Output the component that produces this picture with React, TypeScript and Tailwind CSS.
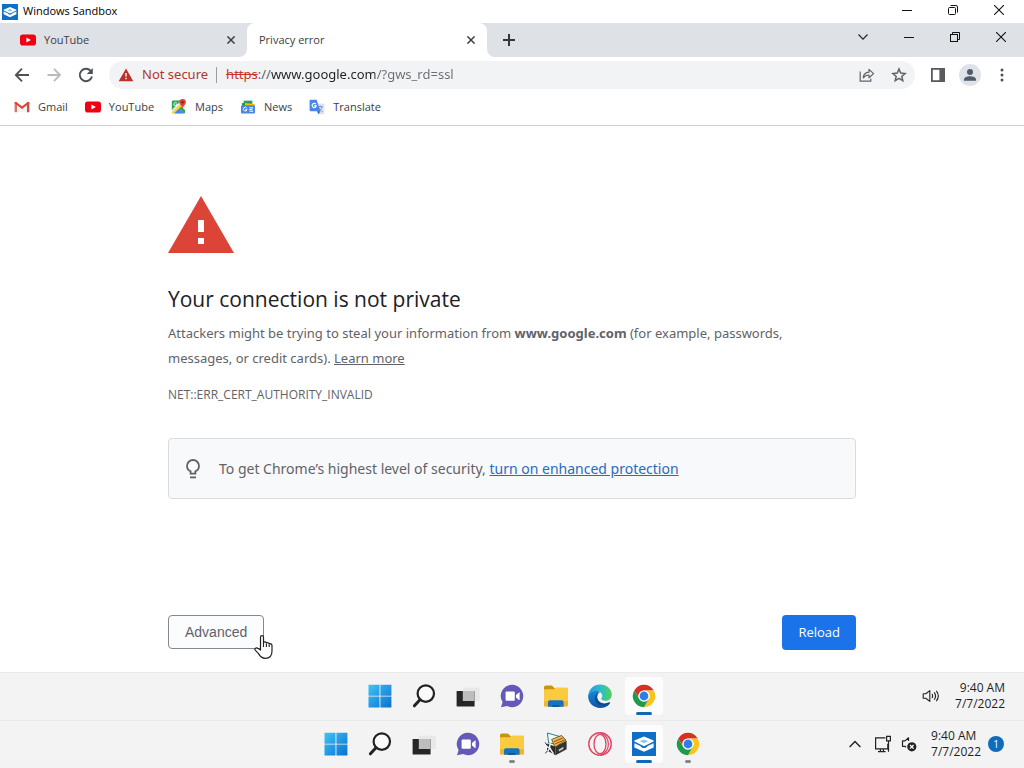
import React from "react";

type P = { className?: string };

/* ---------- brand icons ---------- */
const YouTube = ({ className = "w-4 h-4" }: P) => (
  <svg viewBox="0 0 16 16" className={className} aria-hidden="true">
    <rect x="0" y="2.4" width="16" height="11.2" rx="2.8" fill="#f00010" />
    <path d="M6.4 5.4v5.2L10.9 8z" fill="#fff" />
  </svg>
);
const Gmail = () => (
  <svg viewBox="0 0 16 16" className="w-4 h-4" aria-hidden="true">
    <path d="M.6 3.2h2.6v10H1.3a.8.8 0 0 1-.7-.8z" fill="#d9776f" />
    <path d="M12.8 3.2h2.6v9.2a.8.8 0 0 1-.7.8h-1.9z" fill="#c5524a" />
    <path d="M.6 4.6 8 10.2l7.4-5.6V3.3L14 2.8 8 7.3 2 2.8.6 3.3z" fill="#e0473b" />
    <path d="M3.2 6.6 8 10.2l4.8-3.6v6.6H3.2z" fill="#f6f3f3" />
  </svg>
);
const Maps = () => (
  <svg viewBox="0 0 16 16" className="w-4 h-4" aria-hidden="true">
    <rect x=".8" y="1.6" width="13.2" height="13" rx="1.2" fill="#e8eaed" />
    <path d="M.8 2.8a1.2 1.2 0 0 1 1.2-1.2h8L.8 11z" fill="#34a853" />
    <path d="M.8 13.2 11.6 2.4l2 2L3.2 14.6H2a1.2 1.2 0 0 1-1.2-1.2z" fill="#fbd14b" />
    <path d="M3 14.6 8 9.6l5 5z" fill="#4285f4" />
    <path d="m8 9.6 2.2-2.2 3.8 3.8v2.2a1.2 1.2 0 0 1-1 1.2z" fill="#34a853" />
    <path d="M5.9 4.2a1.7 1.7 0 1 0 .4 1.5H4.8" stroke="#fff" strokeWidth=".9" fill="none" />
    <path d="M11.6 0a3.3 3.3 0 0 1 3.3 3.3c0 2.4-2.6 3.1-3.3 6.2-.7-3.1-3.3-3.8-3.3-6.2A3.3 3.3 0 0 1 11.6 0z" fill="#db4437" />
    <circle cx="11.6" cy="3.3" r="1.2" fill="#7b2a20" />
  </svg>
);
const News = () => (
  <svg viewBox="0 0 16 16" className="w-4 h-4" aria-hidden="true">
    <path d="M3.6 1.6h8.8v6H3.6z" fill="#34a853" />
    <path d="m1.8 4.2 9-2 .8 5H2.4z" fill="#2f8f50" />
    <path d="m5 4 9.6 1-.5 4H5z" fill="#fbbc04" />
    <rect x="1" y="6.2" width="14" height="8.4" rx="1" fill="#4a86e0" />
    <path d="M6.8 9a1.9 1.9 0 1 0 .3 1.7H5.4M9.4 8.8h3.8M9.4 10.5h3M9.4 12.2h3.8" stroke="#fff" strokeWidth="1" fill="none" />
  </svg>
);
const Translate = () => (
  <svg viewBox="0 0 16 16" className="w-4 h-4" aria-hidden="true">
    <path d="M6 4.4h8.4a1 1 0 0 1 1 1v8.8a1 1 0 0 1-1 1H9.6z" fill="#dfe3ea" />
    <path d="M8.8 7.6h5M11.2 6.6v1M13 7.8c-.6 2.2-1.8 3.6-3.6 4.6M9.8 9c.8 1.4 2 2.6 3.8 3.6" stroke="#6a8fd0" strokeWidth=".9" fill="none" />
    <path d="M1.6.8h6l3.8 11.4H1.6a1 1 0 0 1-1-1V1.8a1 1 0 0 1 1-1z" fill="#4a86e8" />
    <path d="m7.8 12.2 1.8 3 1.8-3z" fill="#3367d6" />
    <path d="M6.9 5.2a2.1 2.1 0 1 0 .4 1.7H5.1" stroke="#fff" strokeWidth="1.1" fill="none" />
  </svg>
);
const Sandbox = ({ className = "w-4 h-4" }: P) => (
  <svg viewBox="0 0 24 24" className={className} aria-hidden="true">
    <rect width="24" height="24" fill="#0f6fc6" />
    <path d="m12 4.4 9.6 4.2v1L12 14.2 2.400 9.600v-1z" fill="#fff" />
    <path d="m12 7.4 4.200 1.800-4.200 2-4.200-2z" fill="#8fc3ee" />
    <path d="M2.400 11.200 8.400 14c.8 1.400 2.200 2 3.600 2s2.800-.6 3.600-2l6-2.800v4.200L12 19.800l-9.600-4.400z" fill="#fff" />
  </svg>
);
const Chrome = () => (
  <svg viewBox="0 0 24 24" className="w-6 h-6" aria-hidden="true">
    <circle cx="12" cy="12" r="11.2" fill="#fff" />
    <path d="M2.3 6.4A11.2 11.2 0 0 1 21.7 6.4H12A5.6 5.6 0 0 0 7.15 14.8z" fill="#d93025" />
    <path d="M21.7 6.4A11.2 11.2 0 0 1 12 23.2l4.85-8.4A5.6 5.6 0 0 0 12 6.4z" fill="#fcc31e" />
    <path d="M12 23.2A11.2 11.2 0 0 1 2.3 6.4l4.85 8.4a5.6 5.6 0 0 0 9.7 0z" fill="#1e9a4a" />
    <circle cx="12" cy="12" r="5.6" fill="#fff" />
    <circle cx="12" cy="12" r="4.4" fill="#2f7de9" />
  </svg>
);
const Windows = () => (
  <svg viewBox="0 0 24 24" className="w-6 h-6" aria-hidden="true">
    <defs>
      <linearGradient id="win" x1="0" y1="0" x2="1" y2="1" gradientUnits="objectBoundingBox">
        <stop offset="0" stopColor="#3fc3f5" />
        <stop offset="1" stopColor="#0a70cf" />
      </linearGradient>
    </defs>
    <path d="M.5.8h11v11H.5zM12.4.8h11v11h-11zM.5 12.6h11v11H.5zM12.4 12.6h11v11h-11z" fill="url(#win)" />
  </svg>
);
const Magnifier = () => (
  <svg viewBox="0 0 24 24" className="w-6 h-6" fill="none" stroke="#222" aria-hidden="true">
    <circle cx="13.8" cy="9.6" r="8.2" strokeWidth="2.2" fill="#fafafa" />
    <path d="m8 15.8-5.6 6" strokeWidth="3" strokeLinecap="round" />
  </svg>
);
const TaskView = () => (
  <svg viewBox="0 0 24 24" className="w-6 h-6" aria-hidden="true">
    <rect x="6.8" y="3.6" width="17" height="13.4" fill="#e8e8e8" />
    <rect x=".6" y="7" width="18" height="15.6" rx=".6" fill="#262626" />
    <path d="M6.8 7h11.8v10H6.8z" fill="#bdbdbd" />
  </svg>
);
const Chat = () => (
  <svg viewBox="0 0 24 24" className="w-6 h-6" aria-hidden="true">
    <path d="M12.2.8A11.2 11.2 0 1 1 7 22L1 23.3l1.6-5.2A11.2 11.2 0 0 1 12.2.8z" fill="#6459b9" />
    <rect x="5.6" y="7.6" width="9.2" height="9.2" rx="1" fill="#fff" />
    <path d="m16 11 3-2.6c.3-.2.6 0 .6.3v7c0 .4-.3.5-.6.3L16 13.6z" fill="#fff" />
  </svg>
);
const Folder = () => (
  <svg viewBox="0 0 24 24" className="w-6 h-6" aria-hidden="true">
    <path d="M0 3.2A1.8 1.8 0 0 1 1.8 1.4h6L11 4.6v4H0z" fill="#c8940b" />
    <path d="M1 5.2h9.2l2-1.8h10.3A1.5 1.5 0 0 1 24 5v16a1.5 1.5 0 0 1-1.5 1.5h-21A1.5 1.5 0 0 1 0 21V6z" fill="#fbcb3f" />
    <path d="M0 17h24v4a1.5 1.5 0 0 1-1.5 1.5h-21A1.5 1.5 0 0 1 0 21z" fill="#f0b528" />
    <path d="M4 22.8v-4.6a2 2 0 0 1 2-2h11.6a2 2 0 0 1 2 2v4.6z" fill="#1a70c0" />
    <path d="M8.2 22.8v-1.6h7.2v1.6z" fill="#0b4f94" />
  </svg>
);
const Edge = () => (
  <svg viewBox="0 0 24 24" className="w-6 h-6" aria-hidden="true">
    <defs>
      <linearGradient id="edgeTop" x1="0" y1="0" x2="1" y2="0">
        <stop offset="0" stopColor="#1e9be0" />
        <stop offset=".55" stopColor="#2cbfc4" />
        <stop offset="1" stopColor="#58cf57" />
      </linearGradient>
      <linearGradient id="edgeLow" x1="0" y1="0" x2="0" y2="1">
        <stop offset="0" stopColor="#1887d4" />
        <stop offset="1" stopColor="#0c55a5" />
      </linearGradient>
    </defs>
    <path d="M.2 11.4C.9 4.9 5.8.4 12.2.4c6.6 0 11.6 4.6 11.6 10 0 4-3 6.400-6.300 6.400-3.200 0-4.300-1.300-4.300-2 0-.6 1.100-1 1.100-3 0-2.700-2.600-4.900-6.300-4.900-4.200 0-6.900 2.300-7.800 4.500z" fill="url(#edgeTop)" />
    <path d="M.2 11.4C1 8.9 3.8 6.9 8 6.9c1.600 0 3 .5 4 1.200-2.600.9-4 3.500-4 6.200 0 4.200 3.700 7.500 8.500 7.500 1.600 0 3.600-.8 5-1.800-2 2.600-5.500 4-9.300 4C5.400 24-.5 18.500.2 11.400z" fill="url(#edgeLow)" />
    <path d="M12 8.1c-2.600 1.400-3.200 4.400-2.500 6.700 1.200 3.700 5.300 5.300 9.200 4.300 1.400-.4 2.300-.9 3-.9.600 0 .6.700-.2 1.800-1.800 1.900-4.500 2.500-7 2C10 21.200 7 18 7 14.300 7 11.200 9 8.700 12 8.100z" fill="#0b4a92" />
  </svg>
);
const Toolbox = () => (
  <svg viewBox="0 0 24 24" className="w-6 h-6" aria-hidden="true">
    <path d="m3.4 1 12.6 3.6v8L4.6 11z" fill="#eef9fa" stroke="#2d7f88" strokeWidth="1" />
    <path d="m7.6 7.4 10-4 4.4 4.8-11 7z" fill="#f0b64a" stroke="#473214" strokeWidth=".7" />
    <path d="m9.8 9.8 9.4-4M11 12l9.6-4.2" stroke="#7b4f12" strokeWidth=".9" />
    <path d="m3 11.600 8.600 3.200v8.400L3 18.600z" fill="#2b2b2b" />
    <path d="m11.600 14.800 11-6v8.400l-11 6z" fill="#333" />
    <path d="m14.800 17.400 4.600-2.600v2.200l-4.600 2.600z" fill="#c9c9c9" />
    <path d="M2.400 12.400a2.600 2.600 0 0 0 3 3l4 6.400M6.400 10.800l-1.200 6-3 5" stroke="#f4f4f4" strokeWidth="1.5" fill="none" />
    <path d="m1.2 10.4 1.800 3M1.4 21.4l2-2.600" stroke="#333" strokeWidth="1" />
  </svg>
);
const Opera = () => (
  <svg viewBox="0 0 24 24" className="w-6 h-6" fill="none" stroke="#df4364" aria-hidden="true">
    <circle cx="12" cy="12" r="11.2" strokeWidth="1.4" />
    <ellipse cx="12" cy="12" rx="6" ry="9.6" strokeWidth="1.3" />
    <path d="M12.6 1C18 3 20.4 7.4 20.4 12S18 21 12.6 23" strokeWidth="1.2" />
  </svg>
);

/* ---------- line icons ---------- */
const Minimize = () => (
  <svg viewBox="0 0 10 10" className="w-2.5 h-2.5" shapeRendering="crispEdges" aria-hidden="true"><path d="M0 5.5h10" stroke="#111" /></svg>
);
const Restore = ({ round = false }: { round?: boolean }) => (
  <svg viewBox="0 0 10 10" className="w-2.5 h-2.5" fill="none" stroke="#111" aria-hidden="true">
    <rect x=".5" y="2.5" width="7" height="7" rx={round ? 1 : 0} />
    <path d={round ? "M2.5.5H8A1.5 1.5 0 0 1 9.5 2v5.5" : "M2.5 2.5v-2h7v7h-2"} />
  </svg>
);
const CloseX = () => (
  <svg viewBox="0 0 10 10" className="w-2.5 h-2.5" stroke="#111" strokeWidth="1.1" aria-hidden="true"><path d="m0 0 10 10M10 0 0 10" /></svg>
);
const TabX = () => (
  <svg viewBox="0 0 8 8" className="w-2 h-2" stroke="#3c4043" strokeWidth="1.5" aria-hidden="true"><path d="m.4.4 7.2 7.2M7.6.4.4 7.6" /></svg>
);
const Arrow = ({ back = false }: { back?: boolean }) => (
  <svg viewBox="0 0 16 16" className="w-4 h-4" fill="none" strokeWidth="1.8" stroke={back ? "#4d5156" : "#b9bbbe"} aria-hidden="true">
    <path d={back ? "M15 8H2M8 1.6 1.8 8 8 14.4" : "M1.5 8h12M8 1.9 14 8l-6 6.1"} />
  </svg>
);
const Reload = () => (
  <svg viewBox="0 0 16 16" className="w-4 h-4" aria-hidden="true">
    <path d="M13.1 4.4A6.2 6.2 0 1 0 14 9.6" fill="none" stroke="#4d5156" strokeWidth="1.9" />
    <path d="M14.8 1v6H8.8z" fill="#4d5156" />
  </svg>
);
const SmallWarning = () => (
  <svg viewBox="0 0 16 14" className="w-4 h-3.5" aria-hidden="true">
    <path d="M8 .6 15.3 13.2H.7z" fill="#bf3029" />
    <path d="M7.3 5h1.4v3.6H7.3zM7.3 9.8h1.4v1.4H7.3z" fill="#fff" />
  </svg>
);
const Share = () => (
  <svg viewBox="0 0 16 16" className="w-4 h-4" fill="none" stroke="#5f6368" strokeWidth="1.2" aria-hidden="true">
    <path d="M1.2 4.600v9.600h10.600v-2.400" />
    <path d="M4.2 10.8c.4-3.600 2.600-5.400 5.800-5.600V2.400l4.600 4.200-4.600 4.200V8c-2.600 0-4.200.8-5.800 2.800z" strokeLinejoin="round" />
  </svg>
);
const Star = () => (
  <svg viewBox="0 0 16 16" className="w-4 h-4" fill="none" stroke="#5f6368" strokeWidth="1.5" aria-hidden="true">
    <path d="m8 2 1.7 4.100 4.400.4-3.300 2.900 1 4.300L8 11.400l-3.800 2.300 1-4.300-3.300-2.900 4.400-.4z" />
  </svg>
);
const SidePanel = () => (
  <svg viewBox="0 0 14 14" className="w-3.5 h-3.5" aria-hidden="true">
    <rect width="14" height="14" fill="#5a5b5f" />
    <rect x="1.8" y="1.8" width="6.6" height="10.4" fill="#fff" />
  </svg>
);
const Person = () => (
  <svg viewBox="0 0 22 22" className="w-[22px] h-[22px]" aria-hidden="true">
    <circle cx="11" cy="11" r="11" fill="#dfe3e9" />
    <circle cx="11" cy="8" r="3" fill="#4d5b6b" />
    <path d="M5 16.8v-1.2c0-2.2 3-3.4 6-3.4s6 1.2 6 3.4v1.2z" fill="#4d5b6b" />
  </svg>
);
const Dots = () => (
  <svg viewBox="0 0 4 14" className="w-1 h-3.5" fill="#4d5156" aria-hidden="true">
    <circle cx="2" cy="2" r="1.5" /><circle cx="2" cy="7" r="1.5" /><circle cx="2" cy="12" r="1.5" />
  </svg>
);
const Bulb = () => (
  <svg viewBox="0 0 14 20" className="w-3.5 h-5" fill="none" stroke="#5f6368" strokeWidth="1.8" aria-hidden="true">
    <path d="M4.6 14.700v-2.300C2.300 11.300 1 9.400 1 7a6 6 0 0 1 12 0c0 2.400-1.300 4.300-3.600 5.400v2.300z" />
    <path d="M4 18.400h6" />
  </svg>
);
const Speaker = () => (
  <svg viewBox="0 0 18 16" className="w-[18px] h-4" fill="none" stroke="#222" strokeWidth="1.1" aria-hidden="true">
    <path d="M1.2 5.8v4.4h2.600l4 3.200V2.600l-4 3.200zM10 6c.8 1.200.8 2.800 0 4M12.200 4.400c1.600 2.100 1.600 5.100 0 7.200M14.300 2.800c2.400 3.100 2.400 7.300 0 10.400" strokeLinejoin="round" />
  </svg>
);
const Muted = () => (
  <svg viewBox="0 0 16 16" className="w-4 h-4" fill="none" stroke="#222" aria-hidden="true">
    <path d="M7.5 5V1.8L4 4.9H1.5v5.4H4l1 .9" strokeWidth="1.2" strokeLinejoin="round" />
    <circle cx="10.8" cy="10.8" r="4.6" fill="#222" stroke="none" />
    <path d="m9 9 3.6 3.6M12.6 9 9 12.6" stroke="#fff" strokeWidth="1.3" />
  </svg>
);
const Network = () => (
  <svg viewBox="0 0 18 18" className="w-[18px] h-[18px]" fill="none" stroke="#222" strokeWidth="1.2" aria-hidden="true">
    <path d="M11.4 2.8H1.6v11h12.2V8.8M4 16.6h7.6M6.4 13.8v2.8M9.4 13.8v2.8" />
    <path d="M12.6 1.4h3.8v4.4h-3.8zM14.5 5.8v11" />
  </svg>
);
const Chevron = ({ up = false, className = "w-2.5 h-2.5" }: { up?: boolean; className?: string }) => (
  <svg viewBox="0 0 12 12" className={className} fill="none" stroke="#222" strokeWidth="1.4" aria-hidden="true">
    <path d={up ? "M.6 9 6 3.4 11.4 9" : "M.6 3 6 8.6 11.4 3"} />
  </svg>
);
const Hand = () => (
  <svg viewBox="0 0 20 24" className="absolute left-[86px] top-5 w-5 h-6" aria-hidden="true">
    <path d="M6.5 15V2.200C6.500.2 9.500.2 9.500 2.200V7.600c.4-1 2.700-.9 2.900.4 1-.7 2.500-.2 2.700.9 1.100-.5 2.800 0 2.900 1.600V16c0 4.600-2.400 7.300-6.700 7.300-3.800 0-5.200-1.800-6.800-4.700L1 14.800c-.6-1.700 1.800-2.500 3.200-1.200z" fill="#fff" stroke="#222" strokeWidth="1.2" strokeLinejoin="round" />
    <path d="M9.5 7.6V12M12.4 8.4V12M15.2 9.4V12" stroke="#222" strokeWidth="1.1" />
  </svg>
);

/* ---------- pieces ---------- */
function IconButton({ label, className = "w-8", children }: { label: string; className?: string; children: React.ReactNode }) {
  return (
    <button aria-label={label} className={`flex h-7 shrink-0 items-center justify-center ${className}`}>
      {children}
    </button>
  );
}

function WindowButtons({ round = false }: { round?: boolean }) {
  return (
    <>
      <IconButton label="Minimize" className="w-[46px]"><Minimize /></IconButton>
      <IconButton label="Restore" className="w-[46px]"><Restore round={round} /></IconButton>
      <IconButton label="Close" className="w-[46px]"><CloseX /></IconButton>
    </>
  );
}

type TaskApp = { name: string; icon: React.ReactNode; state?: "active" | "open" };

function Taskbar({ apps, children }: { apps: TaskApp[]; children: React.ReactNode }) {
  return (
    <nav className="grid h-12 shrink-0 grid-cols-[1fr_auto_1fr] border-t border-[#eaeaea] bg-[#f3f3f3] pb-px">
      <div />
      <div className="flex">
        {apps.map((app) => (
          <button key={app.name} aria-label={app.name} className="flex h-full w-11 items-center justify-center">
            <span className={`flex h-[38px] w-[38px] flex-col items-center justify-between rounded pt-[7px] ${app.state === "active" ? "bg-[#fcfcfc]" : ""}`}>
              {app.icon}
              {app.state === "active" && <span className="h-[3px] w-4 rounded-full bg-[#0f67b8]" />}
              {app.state === "open" && <span className="h-[3px] w-1.5 rounded-full bg-[#868686]" />}
            </span>
          </button>
        ))}
      </div>
      <div className="flex items-center justify-end">{children}</div>
    </nav>
  );
}

const Clock = () => (
  <time className="text-right text-xs leading-4 text-[#1f1f1f]">
    9:40 AM<br />7/7/2022
  </time>
);

const common: TaskApp[] = [
  { name: "Start", icon: <Windows /> },
  { name: "Search", icon: <Magnifier /> },
  { name: "Task view", icon: <TaskView /> },
  { name: "Chat", icon: <Chat /> },
];
const guestApps: TaskApp[] = [
  ...common,
  { name: "File Explorer", icon: <Folder /> },
  { name: "Edge", icon: <Edge /> },
  { name: "Chrome", icon: <Chrome />, state: "active" },
];
const hostApps: TaskApp[] = [
  ...common,
  { name: "File Explorer", icon: <Folder />, state: "open" },
  { name: "Toolbox", icon: <Toolbox /> },
  { name: "Opera", icon: <Opera /> },
  { name: "Windows Sandbox", icon: <Sandbox className="w-6 h-6" />, state: "active" },
  { name: "Chrome", icon: <Chrome />, state: "open" },
];
const bookmarks = [
  { name: "Gmail", icon: <Gmail /> },
  { name: "YouTube", icon: <YouTube /> },
  { name: "Maps", icon: <Maps /> },
  { name: "News", icon: <News /> },
  { name: "Translate", icon: <Translate /> },
];

export default function App() {
  return (
    <div className="flex min-h-screen flex-col bg-white font-['Open_Sans','Noto_Sans',sans-serif] text-[11px] text-[#3c4043]">
      <header className="flex h-[23px] items-center px-0.5">
        <Sandbox />
        <span className="ml-[5px] grow text-black">Windows Sandbox</span>
        <div className="flex h-5 items-center self-start"><WindowButtons round /></div>
      </header>

      <div className="flex h-[34px]">
        <div className="flex w-[247px] items-center rounded-br-lg bg-[#dee1e6] pl-5">
          <YouTube />
          <span className="ml-2 grow">YouTube</span>
          <IconButton label="Close YouTube tab"><TabX /></IconButton>
        </div>
        <div className="w-60 bg-[#dee1e6]">
          <div className="flex h-full items-center rounded-t-lg bg-white pl-3">
            <span className="grow">Privacy error</span>
            <IconButton label="Close Privacy error tab"><TabX /></IconButton>
          </div>
        </div>
        <div className="flex grow rounded-bl-lg bg-[#dee1e6]">
          <div className="flex grow items-center pl-1.5">
            <IconButton label="New tab">
              <svg viewBox="0 0 12 12" className="w-3 h-3" stroke="#35373a" strokeWidth="2" aria-hidden="true"><path d="M6 0v12M0 6h12" /></svg>
            </IconButton>
          </div>
          <IconButton label="Search tabs" className="w-[46px]"><Chevron /></IconButton>
          <WindowButtons />
        </div>
      </div>

      <div className="flex h-9 items-center px-1.5">
        <IconButton label="Back"><Arrow back /></IconButton>
        <IconButton label="Forward"><Arrow /></IconButton>
        <IconButton label="Reload page"><Reload /></IconButton>
        <div className="mx-[7px] flex h-7 grow items-center rounded-full bg-[#f1f3f4] pl-[9px] font-['Noto_Sans','Open_Sans',sans-serif] text-[13px]">
          <SmallWarning />
          <span className="ml-2 text-[#b3362e]">Not secure</span>
          <span className="ml-2 mr-[9px] h-4 w-px bg-[#9a9da1]" />
          <span className="text-[#c5372c] line-through">https</span>
          <label htmlFor="address" className="text-[#5f6368]">://</label>
          <input
            id="address"
            type="text"
            spellCheck={false}
            defaultValue="www.google.com/?gws_rd=ssl"
            className="min-w-0 grow bg-[linear-gradient(90deg,#202124_104px,#6a6e73_104px)] bg-clip-text text-transparent outline-none"
          />
          <IconButton label="Share this page"><Share /></IconButton>
          <IconButton label="Bookmark this page"><Star /></IconButton>
        </div>
        <IconButton label="Side panel"><SidePanel /></IconButton>
        <IconButton label="Profile"><Person /></IconButton>
        <IconButton label="Menu"><Dots /></IconButton>
      </div>

      <nav className="flex h-[33px] items-center gap-[17px] border-b border-[#d0d1d3] pb-1 pl-3.5">
        {bookmarks.map((b) => (
          <a key={b.name} href={`#${b.name}`} className="flex items-center gap-2">
            {b.icon}
            {b.name}
          </a>
        ))}
      </nav>

      <main className="grow px-6">
        <div className="mx-auto max-w-[688px] pt-[70px] text-[#5f6368]">
          <svg viewBox="0 0 66 57" className="h-[57px] w-[66px]" aria-hidden="true">
            <path d="M33 0 66 57H0z" fill="#db4437" />
            <path d="M30 24h6v12h-6zM30 42h6v6h-6z" fill="#fff" />
          </svg>
          <h1 className="mt-8 text-[21px] leading-7 text-[#202124]">Your connection is not private</h1>
          <p className="mt-2 pr-8 font-['Noto_Sans','Open_Sans',sans-serif] text-[13px] leading-[25px]">
            Attackers might be trying to steal your information from <strong>www.google.com</strong> (for example, passwords, messages, or credit cards).{" "}
            <a href="#learn-more" className="underline">Learn more</a>
          </p>
          <p className="mt-[15px] text-xs leading-[18px]">NET::ERR_CERT_AUTHORITY_INVALID</p>
          <div className="mt-[34px] flex h-[61px] items-center rounded border border-[#d8dbdf] bg-[#f8f9fa] pl-[17px] font-['Noto_Sans','Open_Sans',sans-serif] text-sm">
            <Bulb />
            <p className="ml-[19px]">
              To get Chrome’s highest level of security,{" "}
              <a href="#enhanced" className="text-[#2a6bbf] underline">turn on enhanced protection</a>
            </p>
          </div>
          <div className="relative mt-[116px] flex items-start justify-between pb-[22px]">
            <button className="h-[34px] rounded border border-[#85898d] bg-[#fbfcfd] px-4 font-['Liberation_Sans',Arial,sans-serif] text-sm">Advanced</button>
            <button className="h-[35px] rounded bg-[#1a73e8] px-4 text-[13px] text-white">Reload</button>
            <Hand />
          </div>
        </div>
      </main>

      <Taskbar apps={guestApps}>
        <div className="flex items-center gap-[15px] pr-[19px]">
          <button aria-label="Volume"><Speaker /></button>
          <Clock />
        </div>
      </Taskbar>
      <Taskbar apps={hostApps}>
        <div className="flex items-center pr-5">
          <IconButton label="Show hidden icons" className="w-7"><Chevron up className="w-3 h-3" /></IconButton>
          <IconButton label="Network" className="w-7"><Network /></IconButton>
          <IconButton label="Muted" className="w-6"><Muted /></IconButton>
          <div className="ml-2.5"><Clock /></div>
          <span className="ml-[7px] flex h-4 w-4 items-center justify-center rounded-full bg-[#0f6cbd] text-[10px] text-white">1</span>
        </div>
      </Taskbar>
    </div>
  );
}
